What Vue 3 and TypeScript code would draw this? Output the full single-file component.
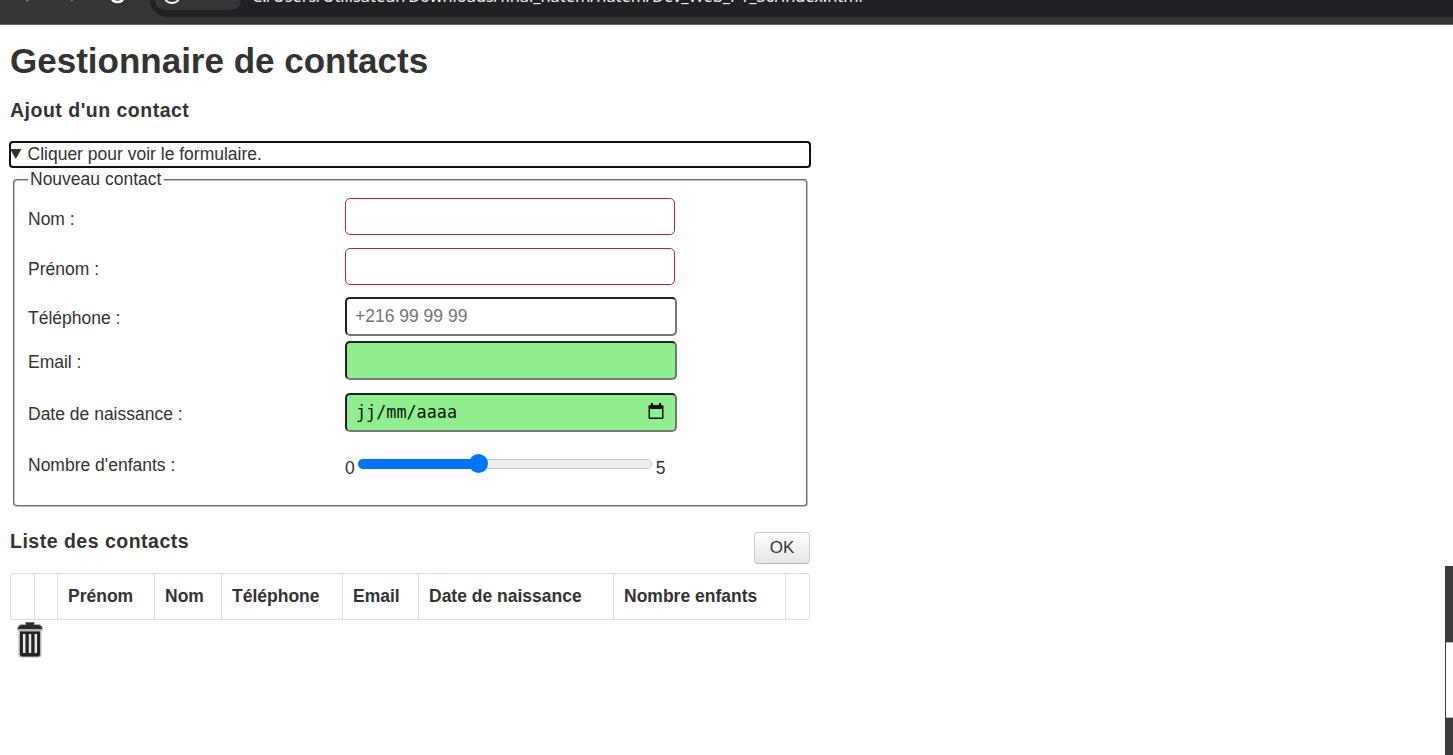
<script setup lang="ts">
import { ref } from 'vue'

interface Column {
  label: string
  width: number
}

const url = 'C:/Users/Utilisateur/Downloads/final_hatem/hatem/Dev_Web_P1_S6/index.html'
const children = ref(2)
const phone = ref('')
const columns: Column[] = [
  { label: '', width: 24 },
  { label: '', width: 23 },
  { label: 'Prénom', width: 97 },
  { label: 'Nom', width: 67 },
  { label: 'Téléphone', width: 121 },
  { label: 'Email', width: 76 },
  { label: 'Date de naissance', width: 195 },
  { label: 'Nombre enfants', width: 172 },
  { label: '', width: 24 },
]
</script>

<template>
  <div class="screen">
    <header class="browser">
      <svg class="nav" width="150" height="25" viewBox="0 0 150 25" fill="none">
        <path d="M24-3L28 1" stroke="#8f8f8f" stroke-width="2" />
        <path d="M75-3L71 1" stroke="#777" stroke-width="2" />
        <path d="M112-1C114 3 121 3 123-1" stroke="#fff" stroke-width="2.6" />
      </svg>
      <div class="address">
        <div class="chip">
          <svg width="20" height="8" viewBox="0 0 20 8" fill="none">
            <path d="M3-3C3 5 17 5 17-3M6-1H14" stroke="#fff" stroke-width="2" />
          </svg>
        </div>
        <span class="url">{{ url }}</span>
      </div>
    </header>

    <main class="page">
      <h1><span>Gestionnaire de contacts</span></h1>
      <h2><span>Ajout d'un contact</span></h2>

      <div class="summary">
        <svg width="12" height="10" viewBox="0 0 12 10"><path d="M0 0H11.500L5.750 10Z" fill="#333" /></svg>
        <span>Cliquer pour voir le formulaire.</span>
      </div>

      <section class="box">
        <div class="legend"><span>Nouveau contact</span></div>
        <div class="row r1"><label>Nom :</label><input class="invalid" type="text" /></div>
        <div class="row r2"><label>Prénom :</label><input class="invalid" type="text" /></div>
        <div class="row r3"><label>Téléphone :</label><input v-model="phone" type="text" placeholder="+216 99 99 99" /></div>
        <div class="row r4"><label>Email :</label><input class="valid" type="text" /></div>
        <div class="row r5">
          <label>Date de naissance :</label>
          <div class="field valid date">
            <span>jj/mm/aaaa</span>
            <svg width="16" height="17" viewBox="0 0 16 17">
              <path d="M3 0H5V2H11V0H13V2H14Q15.500 2 15.500 3.500V14.500Q15.500 16 14 16H2Q.5 16 .5 14.500V3.500Q.5 2 2 2H3ZM2 6V14.500H14V6Z" fill="#071407" fill-rule="evenodd" />
            </svg>
          </div>
        </div>
        <div class="row r6">
          <label>Nombre d'enfants :</label>
          <div class="range">
            <span>0</span>
            <div class="track">
              <div class="fill" :style="{ width: children * 20 + 1 + '%' }"><i></i></div>
            </div>
            <span>5</span>
          </div>
        </div>
      </section>

      <div class="list-head">
        <h2><span>Liste des contacts</span></h2>
        <button type="button">OK</button>
      </div>

      <div class="table">
        <div v-for="(c, i) in columns" :key="i" class="th" :style="{ width: c.width + 'px' }">{{ c.label }}</div>
      </div>

      <svg class="trash" width="28" height="36" viewBox="0 0 28 36">
        <path d="M9 0H19V2H24L27 5V8.500H25.500V32Q25.500 35.500 22 35.500H6Q2.500 35.500 2.500 32V8.500H1V5L4 2H9Z" fill="#b4b4b4" />
        <path d="M10 .5H18V3H23Q26 4 26 7H2Q2 4 5 3H10Z" fill="#2b2b2b" />
        <path d="M4 9.500H24V32Q24 34.500 21.500 34.500H6.500Q4 34.500 4 32Z" fill="#242424" />
        <path d="M8.200 12V31M14 12V31M19.800 12V31" stroke="#e8e8e8" stroke-width="2.500" />
      </svg>
    </main>

    <aside class="edge"><div class="gap"></div></aside>
  </div>
</template>

<style>
body {
  margin: 0;
  background: #fff;
}
</style>

<style scoped>
* {
  box-sizing: border-box;
}
.screen {
  position: relative;
  width: 1453px;
  height: 755px;
  overflow: hidden;
  background: #fff;
  color: #333;
  font: 17.5px/20px "Liberation Sans", Arial, sans-serif;
}
.browser {
  height: 25px;
  display: flex;
  align-items: flex-start;
  background: #353535;
  border-bottom: 1px solid #656565;
  overflow: hidden;
}
.nav {
  flex: none;
}
.address {
  flex: 1;
  height: 17px;
  display: flex;
  background: #202124;
  border-bottom-left-radius: 18px;
}
.chip {
  width: 86px;
  height: 10px;
  margin-left: 5px;
  padding-left: 7px;
  background: #353535;
  border-radius: 0 0 14px 14px;
}
.chip svg {
  display: block;
}
.url {
  margin: -14px 0 0 11px;
  color: #f4f4f4;
  font: 16.36px/20px "Noto Sans", sans-serif;
  white-space: nowrap;
}
.page {
  width: 800px;
  margin-left: 10px;
}
h1,
h2 {
  margin: 0;
  font-weight: 700;
  white-space: nowrap;
}
h1 {
  height: 70px;
  padding-top: 16px;
  font-size: 35px;
  line-height: 40px;
}
h2 {
  height: 46px;
  padding-top: 5px;
  font-size: 19.5px;
  line-height: 20px;
  letter-spacing: 0.5px;
}
.summary {
  width: 802px;
  height: 27px;
  margin-left: -1px;
  padding-bottom: 1px;
  display: flex;
  align-items: center;
  border: 2px solid #101010;
  border-radius: 4px;
}
.summary svg {
  margin-left: -1px;
}
.summary span {
  margin-left: 5.5px;
}
.box {
  width: 795px;
  height: 328px;
  margin: 11px 0 0 3px;
  padding-left: 13px;
  border: 2px groove #c0c0c0;
  border-radius: 4px;
}
.legend {
  height: 29px;
  margin-top: -12px;
}
.legend span {
  display: inline-block;
  padding: 0 3px 0 2px;
  background: #fff;
}
.row {
  display: flex;
}
.row label {
  width: 317px;
  padding-top: 11px;
  white-space: nowrap;
}
.r1 { height: 50px; }
.r2 { height: 49px; }
.r3 { height: 44px; }
.r4 { height: 52px; }
.r5 { height: 51px; }
input,
.field {
  width: 332px;
  height: 39px;
  margin: 0;
  padding: 0 8px;
  font: 17.5px "Liberation Sans", Arial, sans-serif;
  color: #222;
  background: #fff;
  border: 2px inset #767676;
  border-radius: 5px;
  outline: none;
}
input::placeholder {
  color: #757575;
}
input.invalid {
  width: 330px;
  height: 37px;
  border: 1px solid #c1272d;
}
input.valid,
.valid {
  background: #90ee90;
}
.date {
  display: flex;
  align-items: center;
  justify-content: space-between;
  padding: 0 11px 2px 9px;
  color: #071407;
  font: 16.8px/20px "DejaVu Sans Mono", monospace;
}
.range {
  display: flex;
  padding-top: 14px;
}
.track {
  width: 294px;
  height: 10px;
  margin: 1px 4px 0 3px;
  background: #efefef;
  border: 1px solid #c4c4c4;
  border-radius: 5px;
}
.fill {
  position: relative;
  height: 10px;
  margin: -1px 0 0 -1px;
  border-radius: 5px 0 0 5px;
  background: #0075ff;
}
.fill i {
  position: absolute;
  right: -11px;
  top: -5px;
  width: 19px;
  height: 19px;
  border-radius: 50%;
  background: #0075ff;
}
.list-head {
  height: 66px;
  display: flex;
  justify-content: space-between;
  padding-top: 25px;
}
.list-head h2 {
  margin-top: -1px;
  padding-top: 0;
}
button {
  width: 56px;
  height: 32px;
  margin: 0;
  padding: 0;
  color: #333;
  font: 17px "Liberation Sans", Arial, sans-serif;
  background: linear-gradient(#fff, #e6e6e6);
  border: 1px solid #ccc;
  border-bottom-color: #b3b3b3;
  border-radius: 4px;
}
.table {
  height: 47px;
  display: flex;
  border: 1px solid #ddd;
  border-radius: 3px;
}
.th {
  flex: none;
  padding: 12px 0 0 10px;
  font-weight: 700;
  white-space: nowrap;
  border-right: 1px solid #ddd;
}
.th:last-child {
  border-right: 0;
}
.trash {
  display: block;
  margin: 2px 0 0 6px;
}
.edge {
  position: absolute;
  right: 0;
  top: 566px;
  width: 8px;
  height: 189px;
  padding: 76px 0 0 1px;
  background: #3b3b3b;
}
.gap {
  height: 76px;
  background: #fff;
  border-top: 1px solid #bbb;
  border-bottom: 1px solid #bbb;
}
</style>
